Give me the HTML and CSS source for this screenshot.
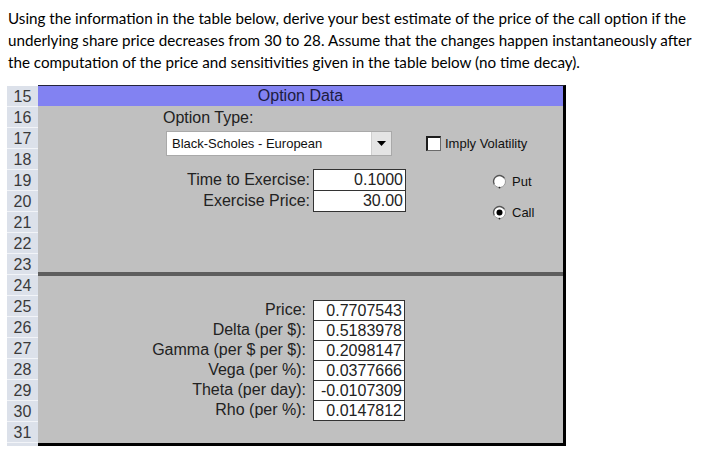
FILE: index.html
```html
<!DOCTYPE html>
<html>
<head>
<meta charset="utf-8">
<link rel="stylesheet" href="styles.css">
</head>
<body>
<div class="question">
  <p class="line">Using the information in the table below, derive your best estimate of the price of the call option if the</p>
  <p class="line">underlying share price decreases from 30 to 28. Assume that the changes happen instantaneously after</p>
  <p class="line">the computation of the price and sensitivities given in the table below (no time decay).</p>
</div>
<div class="sheet">
  <div class="rowhdr">
    <div class="rh">15</div><div class="rh">16</div><div class="rh">17</div><div class="rh">18</div>
    <div class="rh">19</div><div class="rh">20</div><div class="rh">21</div><div class="rh">22</div>
    <div class="rh">23</div><div class="rh">24</div><div class="rh">25</div><div class="rh">26</div>
    <div class="rh">27</div><div class="rh">28</div><div class="rh">29</div><div class="rh">30</div>
    <div class="rh">31</div>
  </div>
  <div class="panel">
    <div class="title">Option Data</div>
    <div class="top">
      <div class="otype">Option Type:</div>
      <div class="ctrl-row">
        <div class="dropdown">
          <span class="dd-text">Black-Scholes - European</span>
          <span class="dd-btn"><svg width="9" height="5" viewBox="0 0 9 5"><path d="M0 0H9L4.5 5Z" fill="#000"/></svg></span>
        </div>
        <div class="check"><span class="cbox"></span><span>Imply Volatility</span></div>
      </div>
      <div class="params-row">
        <div class="params">
          <div class="plabel">Time to Exercise:</div><div class="pval">0.1000</div>
          <div class="plabel">Exercise Price:</div><div class="pval">30.00</div>
        </div>
        <div class="radios">
          <div class="radio">
            <svg width="15" height="15" viewBox="0 0 15 15"><circle cx="7.5" cy="7.5" r="6" fill="#fff"/><path d="M2.3 10.5A6 6 0 0 1 12.7 4.5" fill="none" stroke="#555" stroke-width="1.4"/><path d="M12.7 4.5A6 6 0 0 1 2.3 10.5" fill="none" stroke="#9a9a9a" stroke-width="1"/><circle cx="7.5" cy="13.6" r="0.9" fill="#222"/></svg>
            <span>Put</span>
          </div>
          <div class="radio">
            <svg width="15" height="15" viewBox="0 0 15 15"><circle cx="7.5" cy="7.5" r="6" fill="#fff"/><path d="M2.3 10.5A6 6 0 0 1 12.7 4.5" fill="none" stroke="#555" stroke-width="1.4"/><path d="M12.7 4.5A6 6 0 0 1 2.3 10.5" fill="none" stroke="#9a9a9a" stroke-width="1"/><circle cx="7.5" cy="7.5" r="3" fill="#000"/><circle cx="7.5" cy="13.6" r="0.9" fill="#222"/></svg>
            <span>Call</span>
          </div>
        </div>
      </div>
    </div>
    <div class="divider"></div>
    <div class="bottom">
      <div class="results">
        <div class="rlabel">Price:</div><div class="rval">0.7707543</div>
        <div class="rlabel">Delta (per $):</div><div class="rval">0.5183978</div>
        <div class="rlabel">Gamma (per $ per $):</div><div class="rval">0.2098147</div>
        <div class="rlabel">Vega (per %):</div><div class="rval">0.0377666</div>
        <div class="rlabel">Theta (per day):</div><div class="rval">-0.0107309</div>
        <div class="rlabel">Rho (per %):</div><div class="rval">0.0147812</div>
      </div>
    </div>
  </div>
</div>
</body>
</html>
```
FILE: styles.css
```css
html, body {
  margin: 0;
  padding: 0;
  background: #fff;
}
.question {
  padding: 7px 0 0 8px;
  font-family: Lato, "Open Sans", sans-serif;
  font-size: 15.2px;
  color: #000;
}
.line {
  margin: 0;
  height: 22px;
  line-height: 22px;
  white-space: nowrap;
}
.sheet {
  display: flex;
  margin: 12px 0 0 7px;
  font-family: "Liberation Sans", Arial, sans-serif;
}
.rowhdr {
  width: 31px;
  margin-top: 1px;
  background: #dce1ea;
}
.rh {
  box-sizing: border-box;
  height: 21px;
  line-height: 21px;
  border-bottom: 1px solid #f2f4f8;
  text-align: center;
  font-size: 16px;
  color: #3a3a3a;
}
.panel {
  width: 525px;
  height: 357px;
  background: #c0c0c0;
  border-top: 1px solid #24243c;
  border-right: 3px solid #000;
  border-bottom: 3px solid #000;
}
.title {
  height: 20px;
  line-height: 20px;
  margin-bottom: 1px;
  background: #8282f2;
  text-align: center;
  font-size: 16px;
  color: #1c1c40;
}
.top {
  height: 165px;
  padding-left: 125px;
  box-sizing: border-box;
}
.otype {
  height: 21px;
  line-height: 21px;
  font-size: 16px;
  color: #222;
}
.ctrl-row {
  display: flex;
  align-items: center;
  margin-top: 3px;
  height: 25px;
}
.dropdown {
  display: flex;
  box-sizing: border-box;
  width: 226px;
  height: 25px;
  margin-left: 3px;
  background: #fff;
  border: 1px solid #a9a9a9;
}
.dd-text {
  flex: 1;
  padding-left: 5px;
  line-height: 23px;
  font-size: 13px;
  color: #111;
}
.dd-btn {
  width: 19px;
  display: flex;
  align-items: center;
  justify-content: center;
  background: #e4e4e4;
  border-left: 1px solid #cfcfcf;
}
.check {
  display: flex;
  align-items: center;
  margin-left: 34px;
  font-size: 13px;
  color: #111;
}
.cbox {
  box-sizing: border-box;
  width: 15px;
  height: 15px;
  margin-right: 4px;
  background: #fff;
  border-top: 2px solid #1e1e1e;
  border-left: 2px solid #1e1e1e;
  border-right: 1px solid #6a6a6a;
  border-bottom: 1px solid #6a6a6a;
}
.params-row {
  display: flex;
  margin-top: 13px;
}
.params {
  display: grid;
  grid-template-columns: 147px 93px;
  grid-template-rows: 21px 21px;
  column-gap: 3px;
}
.plabel {
  text-align: right;
  line-height: 21px;
  font-size: 16px;
  color: #222;
}
.pval {
  box-sizing: border-box;
  height: 22px;
  border: 1px solid #333;
  background: #fff;
  text-align: right;
  padding-right: 2px;
  line-height: 20px;
  font-size: 16px;
  color: #222;
}
.radios {
  display: flex;
  flex-direction: column;
  gap: 10px;
  padding-top: 2px;
  margin-left: 86px;
}
.radio {
  display: flex;
  align-items: center;
  gap: 5px;
  height: 21px;
  font-size: 13px;
  color: #111;
}
.divider {
  height: 4px;
  background: #5e5e5e;
}
.bottom {
  padding: 24px 0 0 68px;
}
.results {
  display: grid;
  grid-template-columns: 200px 92px;
  grid-template-rows: repeat(6, 20px);
  column-gap: 7px;
}
.rlabel {
  text-align: right;
  line-height: 20px;
  font-size: 16px;
  color: #222;
}
.rval {
  box-sizing: border-box;
  height: 21px;
  border: 1px solid #333;
  background: #fff;
  text-align: right;
  padding-right: 2px;
  line-height: 19px;
  font-size: 16px;
  color: #222;
}
```
